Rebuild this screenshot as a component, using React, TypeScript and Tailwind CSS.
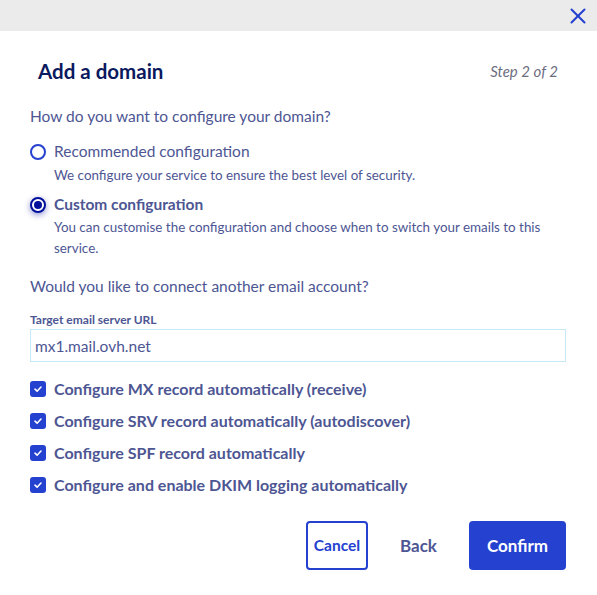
import React from 'react';
import { X } from 'lucide-react';

const checks = [
    'Configure MX record automatically (receive)',
    'Configure SRV record automatically (autodiscover)',
    'Configure SPF record automatically',
    'Configure and enable DKIM logging automatically',
];

export default function App() {
    return (
        <div className="w-[597px] h-[595px] bg-white flex flex-col text-[#4d5693]" style={{ fontFamily: 'Lato, "Open Sans", sans-serif' }}>
            {/* top bar */}
            <div className="h-[31px] bg-[#ebebeb] flex items-center justify-end pr-[6px] shrink-0">
                <button className="text-[#2541cf]"><X size={26} strokeWidth={1.9} /></button>
            </div>

            <div className="flex flex-col pl-[30px] pr-[31px]">
                <div className="flex items-center justify-between px-2 mt-[26px] h-[28px]">
                    <h2 className="text-[20.5px] font-bold text-[#0b1a5e]">Add a domain</h2>
                    <span className="text-[15px] italic text-[#6d6d80]">Step 2 of 2</span>
                </div>

                <p className="mt-[19px] text-[15.5px] leading-[24px]">How do you want to configure your domain?</p>

                {/* radio 1 */}
                <div className="mt-[12px] flex items-center gap-2 h-[24px]">
                    <span className="w-4 h-4 rounded-full border-2 border-[#2541cf] bg-white shrink-0" />
                    <span className="text-[15.5px]">Recommended configuration</span>
                </div>
                <p className="pl-6 mt-[1px] text-[13.4px] leading-[20px]">We configure your service to ensure the best level of security.</p>

                {/* radio 2 */}
                <div className="mt-[8px] flex items-center gap-2 h-[24px]">
                    <span className="w-4 h-4 rounded-full border-2 border-[#000e9c] bg-white shrink-0 flex items-center justify-center shadow-[0_2px_6px_rgba(0,14,156,0.45)]">
                        <span className="w-2 h-2 rounded-full bg-[#000e9c]" />
                    </span>
                    <span className="text-[15.5px] font-bold">Custom configuration</span>
                </div>
                <p className="pl-6 text-[13.4px] leading-[21px] pr-4">You can customise the configuration and choose when to switch your emails to this service.</p>

                <p className="mt-[15px] text-[15.5px] leading-[24px]">Would you like to connect another email account?</p>

                <label className="mt-[14px] text-[12px] leading-[16px] font-bold">Target email server URL</label>
                <input
                    readOnly
                    value="mx1.mail.ovh.net"
                    className="mt-[1px] h-[33px] border border-[#c6e8f7] px-[4px] text-[15.5px] text-[#4d5693] outline-none"
                />

                <div className="mt-[15px] flex flex-col gap-2">
                    {checks.map(c => (
                        <div key={c} className="flex items-center gap-2 h-[24px]">
                            <span className="w-4 h-4 rounded-[3px] bg-[#2541cf] flex items-center justify-center shrink-0">
                                <svg width="10" height="10" viewBox="0 0 10 10" fill="none">
                                    <path d="M2 5.2 L4.1 7.2 L8 3" stroke="white" strokeWidth="1.6" strokeLinecap="round" strokeLinejoin="round" />
                                </svg>
                            </span>
                            <span className="text-[16px] font-bold">{c}</span>
                        </div>
                    ))}
                </div>

                <div className="mt-[24px] flex items-center justify-end gap-4">
                    <button className="h-[49px] w-[62px] border-2 border-[#2541cf] rounded-[4px] text-[15.5px] font-bold text-[#2541cf]">Cancel</button>
                    <button className="h-[49px] px-4 text-[17px] font-bold text-[#4d5693]">Back</button>
                    <button className="h-[49px] px-[18px] rounded-[4px] bg-[#2541cf] text-[17px] font-bold text-white">Confirm</button>
                </div>
            </div>
        </div>
    );
}
